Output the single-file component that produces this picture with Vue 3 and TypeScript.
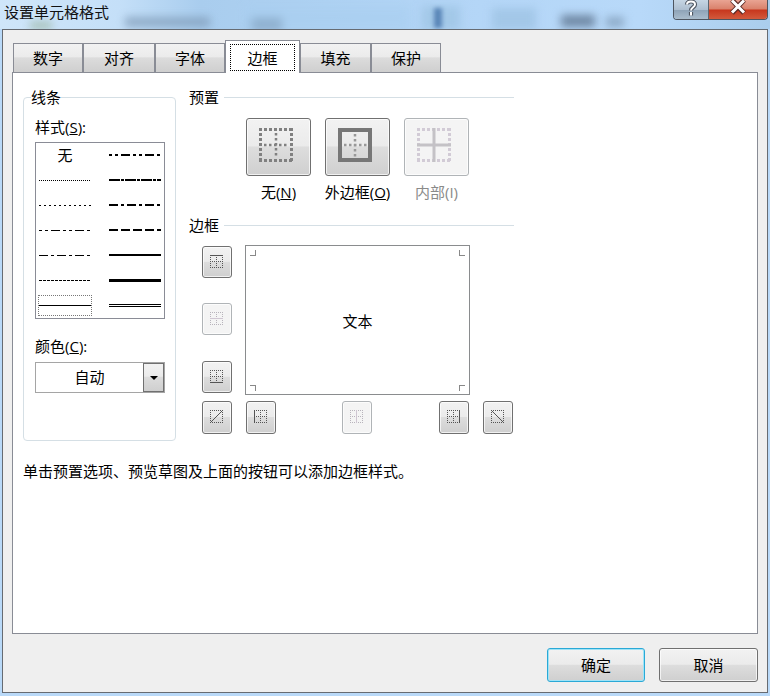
<script setup lang="ts">
interface Stroke { w: number; dash?: string; dbl?: boolean }
const tabs = ['数字', '对齐', '字体', '边框', '填充', '保护']
const rows: { left: Stroke | null; right: Stroke }[] = [
  { left: null, right: { w: 2, dash: '3 3 3 3 9 3' } },
  { left: { w: 1, dash: '1 1' }, right: { w: 2, dash: '11 1 3 1' } },
  { left: { w: 1, dash: '2 3' }, right: { w: 2, dash: '9 3 3 3' } },
  { left: { w: 1, dash: '3 3 3 3 9 3' }, right: { w: 2, dash: '9 3' } },
  { left: { w: 1, dash: '9 3 3 3' }, right: { w: 2 } },
  { left: { w: 1, dash: '3 1' }, right: { w: 3 } },
  { left: { w: 1 }, right: { w: 1, dbl: true } },
]
const lineY = (w: number): number => (w % 2 ? 2.5 : 2)
const presets = [
  { key: 'n', pre: '无(', u: 'N', post: ')', off: false },
  { key: 'o', pre: '外边框(', u: 'O', post: ')', off: false },
  { key: 'i', pre: '内部(I)', u: '', post: '', off: true },
]
const sideBtns = [
  { d: 'M0 .5H13', off: false },
  { d: 'M0 6.5H13', off: true },
  { d: 'M0 12.5H13', off: false },
]
const midBtns = [
  { d: 'M.5 0V13', off: false },
  { d: 'M6.5 0V13', off: true },
  { d: 'M12.5 0V13', off: false },
]
</script>

<template>
  <div class="win">
    <div class="glass">
      <i class="smudge s1"></i><i class="smudge s2"></i><i class="smudge s3"></i>
      <i class="smudge s4"></i><i class="smudge s5"></i><i class="smudge s6"></i>
      <i class="smudge s7"></i><i class="smudge s8"></i><i class="smudge s9"></i>
    </div>
    <header class="title">
      <span class="title-text">设置单元格格式</span>
      <div class="caption">
        <div class="cap help">
          <svg width="14" height="17" viewBox="0 0 14 17" fill="none">
            <path d="M3 4.5C3 .5 11 .5 11 4.5C11 7.5 7 7 7 10.5M7 12V15.5" stroke="#4d5560" stroke-width="4.2" />
            <path d="M3 4.5C3 .5 11 .5 11 4.5C11 7.5 7 7 7 10.5M7 12V15.5" stroke="#fff" stroke-width="2" />
          </svg>
        </div>
        <div class="cap close">
          <svg width="18" height="15" viewBox="0 0 18 15" fill="none">
            <path d="M3 0L15 13M15 0L3 13" stroke="#5a2a25" stroke-width="5" />
            <path d="M3 .5L15 12.5M15 .5L3 12.5" stroke="#fff" stroke-width="3" />
          </svg>
        </div>
      </div>
    </header>

    <main class="client">
      <nav class="tabs">
        <div v-for="t in tabs" :key="t" class="tab" :class="{ active: t === '边框' }">
          <span class="tab-label">{{ t }}</span>
        </div>
      </nav>

      <section class="panel">
        <div class="columns">
          <div class="group">
            <span class="legend">线条</span>
            <div class="lbl">样式(<u>S</u>):</div>
            <div class="list">
              <template v-for="(r, i) in rows" :key="i">
                <div class="cell left">
                  <span v-if="!r.left" class="none">无</span>
                  <svg v-else width="52" height="5" viewBox="0 0 52 5">
                    <line x1="0" x2="52" :y1="lineY(r.left.w)" :y2="lineY(r.left.w)" stroke="#000" :stroke-width="r.left.w" :stroke-dasharray="r.left.dash" />
                  </svg>
                </div>
                <div class="cell right">
                  <svg width="52" height="5" viewBox="0 0 52 5">
                    <template v-if="r.right.dbl">
                      <line x1="0" x2="52" y1="1.5" y2="1.5" stroke="#000" />
                      <line x1="0" x2="52" y1="3.5" y2="3.5" stroke="#000" />
                    </template>
                    <line v-else x1="0" x2="52" :y1="lineY(r.right.w)" :y2="lineY(r.right.w)" stroke="#000" :stroke-width="r.right.w" :stroke-dasharray="r.right.dash" />
                  </svg>
                </div>
              </template>
              <i class="focus"></i>
            </div>
            <div class="lbl color-lbl">颜色(<u>C</u>):</div>
            <div class="combo">
              <span class="combo-text">自动</span>
              <span class="combo-btn"><i class="arrow"></i></span>
            </div>
          </div>

          <div class="side">
            <div class="head"><span>预置</span><i></i></div>
            <div class="presets">
              <div v-for="p in presets" :key="p.key" class="preset" :class="{ off: p.off }">
                <div class="btn big">
                  <svg width="34" height="34" viewBox="0 0 34 34" fill="none">
                    <g v-if="p.key === 'n'" stroke="#808080" stroke-width="3" stroke-dasharray="3 2">
                      <path d="M0 1.5H34M0 32.5H34M1.5 0V34M32.5 0V34" />
                      <path d="M17 5V30M5 17H30" stroke-width="2.5" stroke-dasharray="2.5 2.5" />
                    </g>
                    <g v-else-if="p.key === 'o'">
                      <rect x="2" y="2" width="30" height="30" stroke="#777" stroke-width="4" />
                      <path d="M17 6V30M6 17H30" stroke="#999" stroke-width="2.5" stroke-dasharray="2.5 2.5" />
                    </g>
                    <g v-else>
                      <path d="M0 1.5H34M0 32.5H34M1.5 0V34M32.5 0V34" stroke="#d2cbd6" stroke-width="3" stroke-dasharray="3 2" />
                      <path d="M17 0V34M0 17H34" stroke="#c4c2c6" stroke-width="3" />
                    </g>
                  </svg>
                </div>
                <span class="preset-lbl">{{ p.pre }}<u v-if="p.u">{{ p.u }}</u>{{ p.post }}</span>
              </div>
            </div>

            <div class="head border-head"><span>边框</span><i></i></div>
            <div class="editor">
              <div class="side-btns">
                <div v-for="(b, i) in sideBtns" :key="i" class="btn small" :class="{ off: b.off }">
                  <svg width="13" height="13" viewBox="0 0 13 13" fill="none">
                    <path d="M0 .5H13M0 12.5H13M.5 0V13M12.5 0V13M6.5 0V13M0 6.5H13" class="dots" />
                    <path :d="b.d" class="solid" />
                  </svg>
                </div>
              </div>
              <div class="preview">
                <span>文本</span>
                <i class="mark tl"></i><i class="mark tr"></i><i class="mark bl"></i><i class="mark br"></i>
              </div>
            </div>
            <div class="bottom-btns">
              <div class="btn small">
                <svg width="13" height="13" viewBox="0 0 13 13" fill="none">
                  <path d="M0 .5H13M0 12.5H13M.5 0V13M12.5 0V13" class="dots" />
                  <path d="M0 13L13 0" class="solid" />
                </svg>
              </div>
              <div class="mid-btns">
                <div v-for="(b, i) in midBtns" :key="i" class="btn small" :class="{ off: b.off }">
                  <svg width="13" height="13" viewBox="0 0 13 13" fill="none">
                    <path d="M0 .5H13M0 12.5H13M.5 0V13M12.5 0V13M6.5 0V13M0 6.5H13" class="dots" />
                    <path :d="b.d" class="solid" />
                  </svg>
                </div>
              </div>
              <div class="btn small">
                <svg width="13" height="13" viewBox="0 0 13 13" fill="none">
                  <path d="M0 .5H13M0 12.5H13M.5 0V13M12.5 0V13" class="dots" />
                  <path d="M0 0L13 13" class="solid" />
                </svg>
              </div>
            </div>
          </div>
        </div>
        <p class="hint">单击预置选项、预览草图及上面的按钮可以添加边框样式。</p>
      </section>

      <footer class="actions">
        <div class="btn action default">确定</div>
        <div class="btn action">取消</div>
      </footer>
    </main>
  </div>
</template>

<style scoped>
.win {
  position: relative;
  width: 770px;
  height: 696px;
  overflow: hidden;
  display: flex;
  flex-direction: column;
  background: #b9d9f8;
  font-family: "Open Sans", "Noto Sans CJK SC", sans-serif;
  font-size: 15px;
  color: #000;
}
.glass {
  position: absolute;
  left: 0;
  right: 0;
  top: 0;
  height: 29px;
  overflow: hidden;
  background: linear-gradient(90deg, #cfe6fa 0, #c4dff8 120px, #a9cdee 200px, #b4d6f7 480px, #b8d9f9 640px, #aacdec 770px);
}
.smudge {
  position: absolute;
  filter: blur(4px);
  display: block;
}
.s1 { left: 125px; top: 17px; width: 85px; height: 10px; background: #7d98b4; opacity: .7; }
.s2 { left: 252px; top: 18px; width: 30px; height: 10px; background: #66809c; }
.s3 { left: 245px; top: 6px; width: 165px; height: 24px; background: #a9cff0; filter: blur(5px); opacity: .6; }
.s4 { left: 422px; top: 6px; width: 38px; height: 24px; background: #a3c8e8; }
.s5 { left: 434px; top: 8px; width: 8px; height: 20px; background: #5a86b8; filter: blur(2px); }
.s6 { left: 492px; top: 8px; width: 44px; height: 22px; background: #a3c7e8; }
.s7 { left: 561px; top: 15px; width: 34px; height: 12px; background: #6f88a4; }
.s8 { left: 606px; top: 17px; width: 18px; height: 10px; background: #8ca9c6; }
.s9 { left: 30px; top: 22px; width: 22px; height: 7px; background: #a3bdb0; }

.title {
  position: relative;
  height: 29px;
  display: flex;
  justify-content: space-between;
  align-items: flex-start;
  padding: 0 2px 0 4px;
  flex: none;
}
.title-text {
  line-height: 25px;
  color: #111;
}
.caption {
  display: flex;
  height: 19px;
  border: 1px solid #4d5560;
  border-top: 0;
  border-radius: 0 0 4px 4px;
  overflow: hidden;
}
.cap {
  display: flex;
  align-items: flex-start;
  justify-content: center;
}
.help {
  width: 34px;
  background: linear-gradient(#c6d6e4, #aebfd0 50%, #8fa4b8 55%, #a9bccc);
  border-right: 1px solid #5c6670;
}
.close {
  width: 58px;
  background: linear-gradient(#e9a493, #d9816b 48%, #c7361d 52%, #d25a3c);
}

.client {
  position: relative;
  width: 766px;
  height: 664px;
  margin-left: 2px;
  box-sizing: border-box;
  border: 1px solid #666b72;
  background: #efefef;
  padding: 10px 9px 0 10px;
  display: flex;
  flex-direction: column;
}
.tabs {
  display: grid;
  grid-template-columns: 70px 72px 70px 75px 71px 70px;
  height: 32px;
  position: relative;
  z-index: 1;
  align-items: end;
}
.tab {
  height: 29px;
  box-sizing: border-box;
  border: 1px solid #898c95;
  border-bottom: 0;
  background: linear-gradient(#f2f2f2, #ebebeb 45%, #dcdcdc 50%, #cfcfcf);
  display: flex;
  align-items: center;
  justify-content: center;
}
.tab.active {
  height: 33px;
  margin-bottom: -1px;
  background: #fff;
  padding: 3px 4px 2px;
}
.tab-label { line-height: 20px; }
.active .tab-label {
  flex: 1;
  align-self: stretch;
  border: 1px dotted #000;
  display: flex;
  align-items: center;
  justify-content: center;
}
.panel {
  width: 746px;
  height: 562px;
  margin-left: -1px;
  box-sizing: border-box;
  border: 1px solid #898c95;
  background: #fff;
  padding: 14px 0 0 10px;
  flex: none;
}
.columns {
  display: flex;
  gap: 13px;
  align-items: flex-start;
}
.group {
  position: relative;
  width: 153px;
  height: 344px;
  margin-top: 10px;
  box-sizing: border-box;
  border: 1px solid #d5dfe5;
  border-radius: 4px;
  padding: 20px 0 0 11px;
}
.legend {
  position: absolute;
  left: 7px;
  top: -11px;
  line-height: 20px;
  background: #fff;
}
.lbl { line-height: 18px; }
.list {
  position: relative;
  width: 130px;
  height: 177px;
  margin-top: 6px;
  box-sizing: border-box;
  border: 1px solid #8a8c96;
  display: grid;
  grid-template-columns: 64px 64px;
  grid-auto-rows: 25px;
}
.cell {
  display: flex;
  align-items: center;
}
.cell.left { padding-left: 3px; }
.cell.right { padding-left: 9px; }
.none {
  width: 52px;
  text-align: center;
  line-height: 18px;
  margin-bottom: 2px;
}
.focus {
  position: absolute;
  left: 2px;
  top: 152px;
  width: 52px;
  height: 19px;
  border: 1px dotted #777;
}
.color-lbl { margin-top: 18px; }
.combo {
  width: 130px;
  height: 31px;
  margin-top: 7px;
  box-sizing: border-box;
  border: 1px solid #a5a5a5;
  display: flex;
  align-items: stretch;
}
.combo-text {
  flex: 1;
  text-align: center;
  line-height: 29px;
}
.combo-btn {
  width: 21px;
  box-sizing: border-box;
  border: 1px solid #707070;
  background: linear-gradient(#f2f2f2, #ebebeb 45%, #dcdcdc 50%, #cfcfcf);
  display: flex;
  align-items: center;
  justify-content: center;
}
.arrow {
  width: 0;
  height: 0;
  border-left: 4px solid transparent;
  border-right: 4px solid transparent;
  border-top: 4px solid #000;
}

.side { width: 325px; }
.head {
  display: flex;
  align-items: center;
  height: 20px;
  line-height: 20px;
}
.head i {
  flex: 1;
  height: 1px;
  margin-left: 5px;
  background: #d5dfe5;
}
.presets {
  display: flex;
  gap: 14px;
  padding-left: 57px;
  margin-top: 11px;
}
.preset {
  width: 65px;
  display: flex;
  flex-direction: column;
  align-items: center;
}
.btn {
  box-sizing: border-box;
  border: 1px solid #707070;
  border-radius: 3px;
  background: linear-gradient(#f2f2f2, #ebebeb 48%, #dddddd 50%, #cfcfcf);
  box-shadow: inset 0 0 0 1px rgba(255, 255, 255, .7);
  display: flex;
  align-items: center;
  justify-content: center;
}
.big {
  width: 65px;
  height: 58px;
  padding: 0 5px 4px 0;
}
.preset.off .btn, .btn.off {
  border-color: #b0b4b7;
  background: #f4f4f4;
}
.preset-lbl {
  margin-top: 6px;
  line-height: 20px;
  white-space: nowrap;
}
.preset.off .preset-lbl { color: #8a8a8a; }
.border-head { margin-top: 13px; }
.editor {
  display: flex;
  margin-top: 10px;
  padding-left: 13px;
  gap: 13px;
}
.side-btns {
  width: 30px;
  margin-top: 1px;
  display: flex;
  flex-direction: column;
  gap: 25px;
}
.side-btns .small:nth-child(3) { margin-top: 1px; }
.small {
  width: 30px;
  height: 32px;
  flex: none;
  padding: 0 1px 1px 0;
}
.dots {
  stroke: #555;
  stroke-dasharray: 1 1;
}
.solid { stroke: #555; }
.btn.off .dots { stroke: #b8b4bc; }
.btn.off .solid { stroke: #cfc6d2; }
.preview {
  position: relative;
  width: 225px;
  height: 150px;
  box-sizing: border-box;
  border: 1px solid #8a8c8e;
  display: flex;
  align-items: center;
  justify-content: center;
}
.mark {
  position: absolute;
  width: 5px;
  height: 5px;
  border: 0 solid #888;
}
.tl { left: 4px; top: 4px; border-width: 0 1px 1px 0; }
.tr { right: 4px; top: 4px; border-width: 0 0 1px 1px; }
.bl { left: 4px; bottom: 3px; border-width: 1px 1px 0 0; }
.br { right: 4px; bottom: 3px; border-width: 1px 0 0 1px; }
.bottom-btns {
  display: flex;
  gap: 14px;
  margin-top: 6px;
  padding-left: 13px;
}
.bottom-btns .small {
  height: 33px;
  padding-bottom: 2px;
}
.mid-btns {
  width: 223px;
  display: flex;
  gap: 66px;
}
.mid-btns .small:nth-child(3) { margin-left: 1px; }
.hint {
  margin: 20px 0 0;
  line-height: 20px;
}
.actions {
  display: flex;
  justify-content: flex-end;
  gap: 14px;
  margin-top: 14px;
}
.action {
  width: 99px;
  height: 34px;
  line-height: 20px;
}
.default {
  width: 98px;
  border-color: #2aa9d6;
  box-shadow: inset 0 0 0 1px #9fe3f7;
}
</style>

<style>
body { margin: 0; }
</style>
